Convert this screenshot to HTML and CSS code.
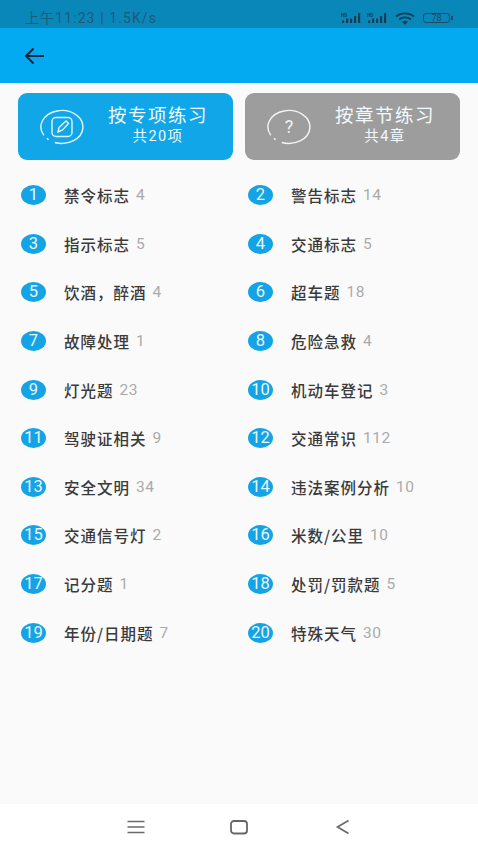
FILE: index.html
```html
<!DOCTYPE html>
<html lang="zh">
<head>
<meta charset="utf-8">
<title>练习</title>
<link rel="stylesheet" href="styles.css">
</head>
<body>
<div class="screen">
  <header class="status">
    <span class="status-text">上午11:23 | 1.5K/s</span>
    <span class="status-icons">
      <svg class="sig" viewBox="0 0 22 12"><text x="0" y="4.6" class="hd">HD</text><g fill="#143d58"><rect x="1" y="8.500" width="2.200" height="2.500"/><rect x="5" y="6.500" width="2.200" height="4.500"/><rect x="9" y="6.500" width="2.200" height="4.500"/><rect x="13" y="4" width="2.200" height="7"/><rect x="17" y="1" width="2.200" height="10"/></g></svg>
      <svg class="sig" viewBox="0 0 22 12"><text x="0" y="4.6" class="hd">HD</text><g fill="#143d58"><rect x="1" y="8.500" width="2.200" height="2.500"/><rect x="5" y="6.500" width="2.200" height="4.500"/><rect x="9" y="6.500" width="2.200" height="4.500"/><rect x="13" y="4" width="2.200" height="7"/><rect x="17" y="1" width="2.200" height="10"/></g></svg>
      <svg class="wifi" viewBox="0 0 20 13"><g fill="none" stroke="#143d58" stroke-width="1.700"><path d="M1 4.500C6 .3 14 .3 19 4.500"/><path d="M4 7.500C7.500 4.600 12.500 4.600 16 7.500"/></g><path d="M7 9.800C8.800 8.500 11.200 8.500 13 9.800L10 12.800Z" fill="#143d58"/></svg>
      <span class="batt"><span class="batt-num">78</span></span>
    </span>
  </header>
  <div class="appbar">
    <svg class="back" viewBox="0 0 20 18"><path d="M20 9H2M9.500 1.500 2 9l7.500 7.500" fill="none" stroke="#14263c" stroke-width="2"/></svg>
  </div>
  <main class="content">
    <div class="cards">
      <section class="card card-blue">
        <svg class="card-icon" viewBox="0 0 46 36"><g fill="none" stroke="#e8f6fd" stroke-width="1.400"><path d="M4.800 26.300A21 16.500 0 1 1 15.800 33.500"/><path d="M8 29.300 9.500 30.800"/><rect x="13" y="8.500" width="20" height="19" rx="4"/><path d="M19 23l1-4.500 7-6.500 2.500 2.500-6 6.500Z"/></g></svg>
        <div class="card-text"><div class="card-title">按专项练习</div><div class="card-sub">共20项</div></div>
      </section>
      <section class="card card-grey">
        <svg class="card-icon" viewBox="0 0 46 36"><g fill="none" stroke="#f4f4f4" stroke-width="1.400"><path d="M4.800 26.300A21 16.500 0 1 1 15.800 33.500"/><path d="M8 29.300 9.500 30.800"/></g><text x="23" y="24" class="q">?</text></svg>
        <div class="card-text"><div class="card-title">按章节练习</div><div class="card-sub">共4章</div></div>
      </section>
    </div>
    <ul class="list">
      <li class="item"><span class="num">1</span><span class="name">禁令标志</span><span class="count">4</span></li>
      <li class="item"><span class="num">2</span><span class="name">警告标志</span><span class="count">14</span></li>
      <li class="item"><span class="num">3</span><span class="name">指示标志</span><span class="count">5</span></li>
      <li class="item"><span class="num">4</span><span class="name">交通标志</span><span class="count">5</span></li>
      <li class="item"><span class="num">5</span><span class="name">饮酒，醉酒</span><span class="count">4</span></li>
      <li class="item"><span class="num">6</span><span class="name">超车题</span><span class="count">18</span></li>
      <li class="item"><span class="num">7</span><span class="name">故障处理</span><span class="count">1</span></li>
      <li class="item"><span class="num">8</span><span class="name">危险急救</span><span class="count">4</span></li>
      <li class="item"><span class="num">9</span><span class="name">灯光题</span><span class="count">23</span></li>
      <li class="item"><span class="num">10</span><span class="name">机动车登记</span><span class="count">3</span></li>
      <li class="item"><span class="num">11</span><span class="name">驾驶证相关</span><span class="count">9</span></li>
      <li class="item"><span class="num">12</span><span class="name">交通常识</span><span class="count">112</span></li>
      <li class="item"><span class="num">13</span><span class="name">安全文明</span><span class="count">34</span></li>
      <li class="item"><span class="num">14</span><span class="name">违法案例分析</span><span class="count">10</span></li>
      <li class="item"><span class="num">15</span><span class="name">交通信号灯</span><span class="count">2</span></li>
      <li class="item"><span class="num">16</span><span class="name">米数/公里</span><span class="count">10</span></li>
      <li class="item"><span class="num">17</span><span class="name">记分题</span><span class="count">1</span></li>
      <li class="item"><span class="num">18</span><span class="name">处罚/罚款题</span><span class="count">5</span></li>
      <li class="item"><span class="num">19</span><span class="name">年份/日期题</span><span class="count">7</span></li>
      <li class="item"><span class="num">20</span><span class="name">特殊天气</span><span class="count">30</span></li>
    </ul>
  </main>
  <nav class="navbar">
    <svg class="nav-icon" viewBox="0 0 20 16"><path d="M1.500 2.500h17M1.500 8h17M1.500 13.500h17" fill="none" stroke="#6a6a6a" stroke-width="1.700"/></svg>
    <svg class="nav-icon" viewBox="0 0 20 16"><rect x="2" y="2" width="16" height="12.500" rx="3" fill="none" stroke="#666" stroke-width="1.800"/></svg>
    <svg class="nav-icon" viewBox="0 0 20 16"><path d="M15.500 1.500 4.500 8l11 6.500" fill="none" stroke="#6a6a6a" stroke-width="1.700"/></svg>
  </nav>
</div>
</body>
</html>
```
FILE: styles.css
```css
* { box-sizing: border-box; }
html, body { margin: 0; padding: 0; }
body { font-family: "Noto Sans CJK SC", "Noto Sans", sans-serif; background: #fafafa; }
.screen { width: 478px; height: 850px; display: flex; flex-direction: column; overflow: hidden; }
.status { height: 28px; flex: none; background: #0a87b9; display: flex; align-items: center; justify-content: space-between; padding: 8px 28px 0 25px; color: #1d5a7c; }
.status-text { font-size: 14px; letter-spacing: 1.100px; font-family: "Roboto", "Noto Sans CJK SC", sans-serif; line-height: 1; }
.status-icons { display: flex; align-items: center; gap: 4px; }
.sig { width: 22px; height: 12px; display: block; }
.hd { font: 700 4.500px "Roboto", sans-serif; fill: #143d58; }
.wifi { width: 20px; height: 13px; display: block; margin: 0 4px 0 2px; }
.batt { width: 27px; height: 10px; border: 1px solid #1d4a66; border-radius: 3px; display: flex; align-items: center; justify-content: center; position: relative; }
.batt::after { content: ""; position: absolute; right: -4px; top: 2px; width: 2px; height: 4px; background: #1d4a66; }
.batt-num { font: 9px/1 "Roboto", sans-serif; color: #1d4a66; }
.appbar { height: 55px; flex: none; background: #03a9f1; display: flex; align-items: center; padding-left: 24px; }
.back { width: 20px; height: 18px; display: block; }
.content { flex: 1; padding: 10px 18px 0; }
.cards { display: flex; gap: 12px; }
.card { width: 215px; height: 67px; border-radius: 9px; display: flex; align-items: center; color: #f2fafe; }
.card-blue { background: #10a6e8; padding-left: 21px; }
.card-grey { background: #9d9d9d; padding-left: 21px; }
.card-icon { width: 46px; height: 36px; flex: none; display: block; }
.q { font: 400 18px "Roboto", sans-serif; fill: #f4f4f4; text-anchor: middle; }
.card-text { margin-left: 22px; width: 102px; text-align: center; padding-bottom: 2px; font-family: "Roboto", "Noto Sans CJK SC", sans-serif; }
.card-title { font-size: 18.500px; line-height: 22px; letter-spacing: 1.500px; white-space: nowrap; }
.card-sub { font-size: 14.500px; line-height: 18px; margin-top: 1px; letter-spacing: 1.400px; white-space: nowrap; }
.list { list-style: none; margin: 11px 0 0; padding: 0 0 0 3px; display: grid; grid-template-columns: 227px 227px; grid-auto-rows: 48.600px; }
.item { display: flex; align-items: center; }
.num { width: 25px; height: 20px; border-radius: 50%; background: #14a3e4; color: #e8f7fe; font: 16.500px/20px "Roboto", sans-serif; text-align: center; flex: none; }
.name { margin-left: 18px; font-size: 15.500px; font-weight: 500; letter-spacing: 1px; line-height: 22px; color: #3a3a3a; white-space: nowrap; }
.count { margin-left: 6px; font: 15.500px/22px "Roboto", sans-serif; letter-spacing: .5px; color: #aaa; }
.navbar { height: 46px; flex: none; background: #fff; display: grid; grid-template-columns: 20px 20px 20px; column-gap: 83.500px; justify-content: center; align-items: center; }
.nav-icon { width: 20px; height: 16px; display: block; }
```
